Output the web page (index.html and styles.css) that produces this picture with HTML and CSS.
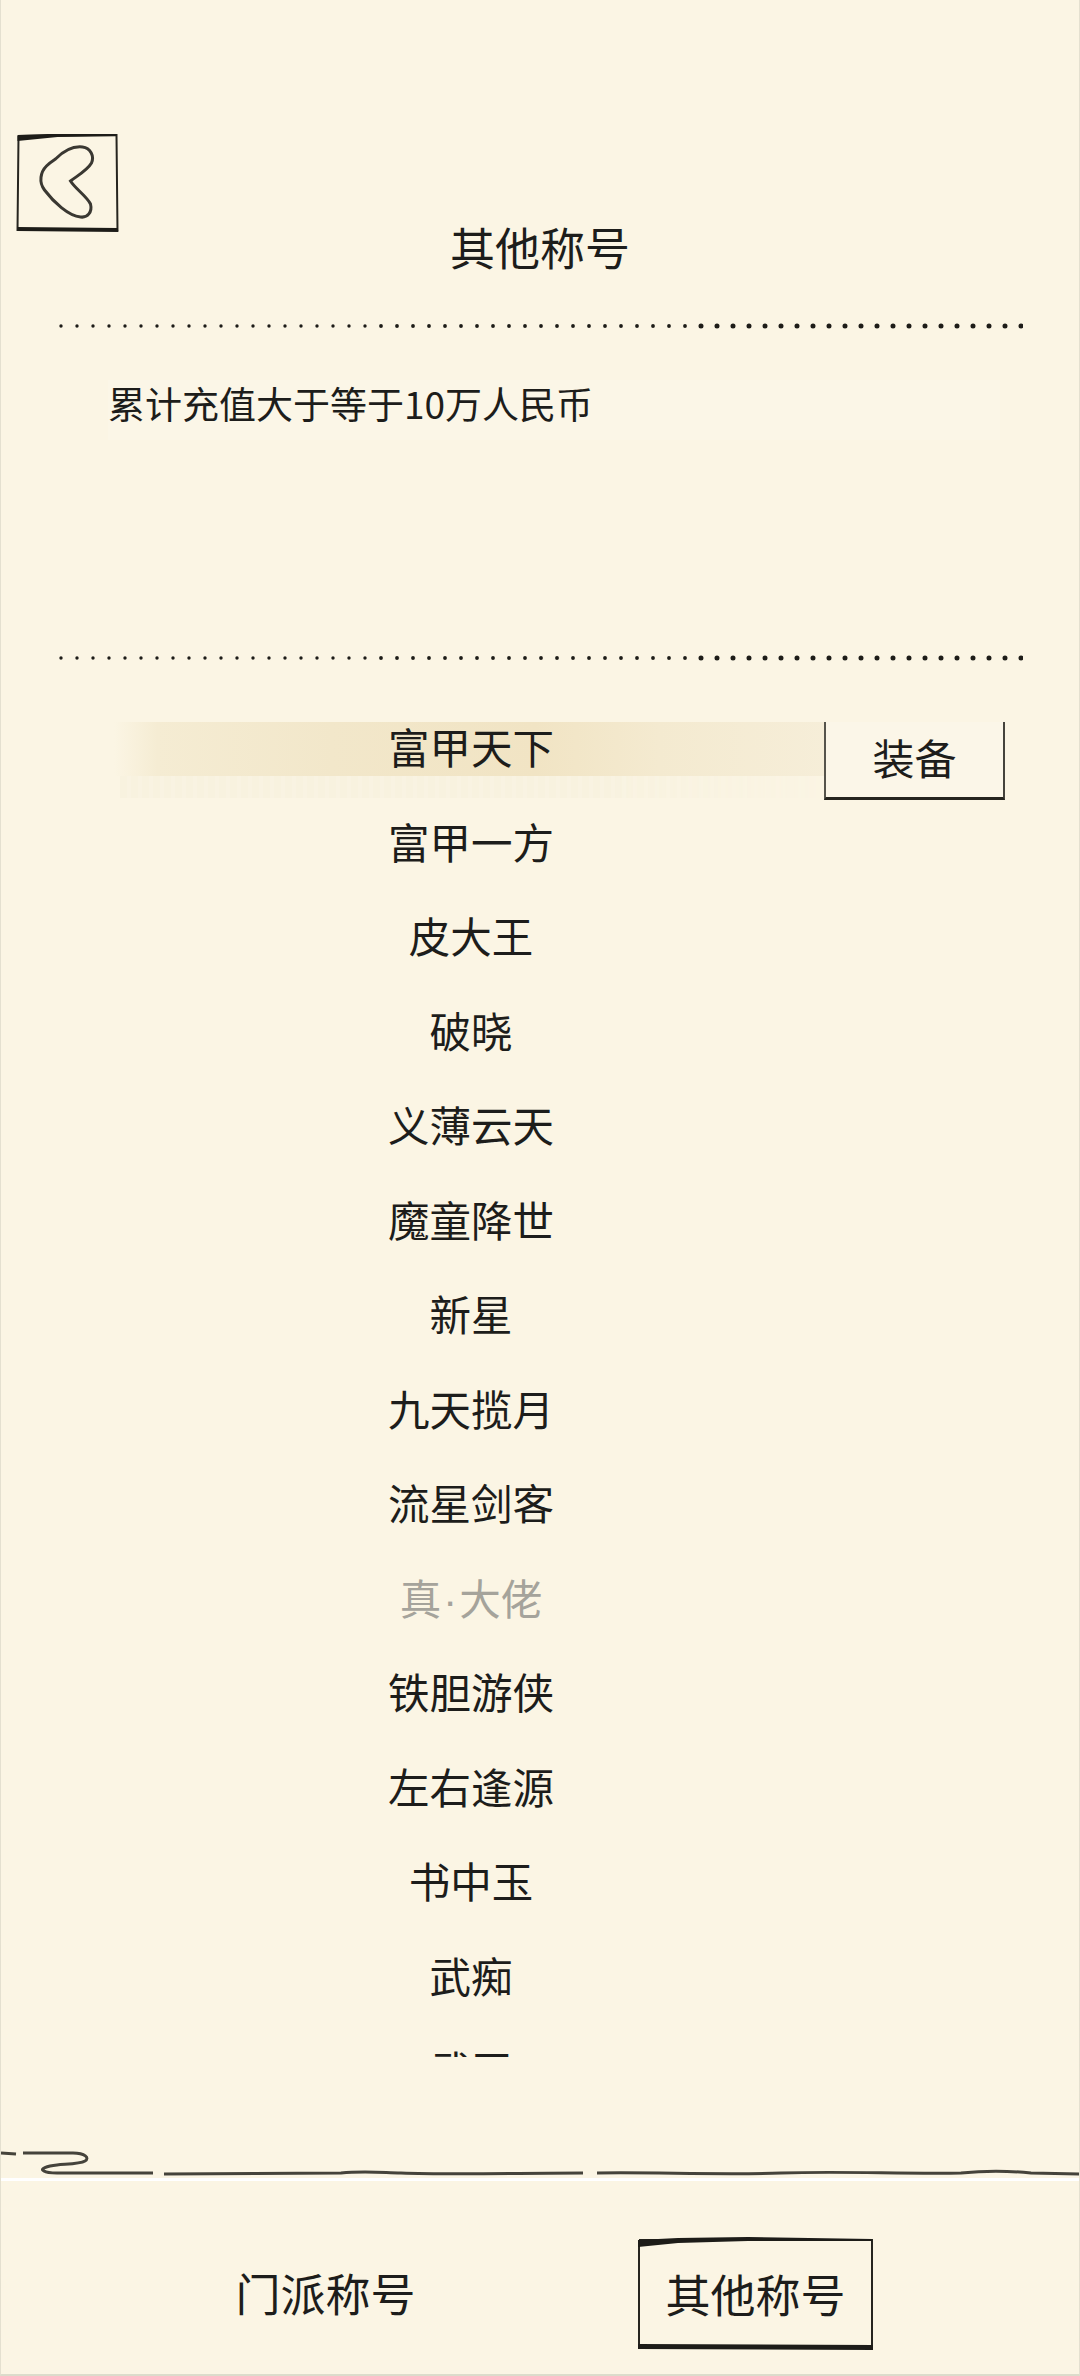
FILE: index.html
```html
<!DOCTYPE html>
<html lang="zh-CN">
<head>
    <meta charset="UTF-8">
    <meta name="viewport" content="width=device-width, initial-scale=1.0">
    <title>其他称号</title>
    <link rel="stylesheet" href="styles.css">
</head>
<body>
    <div class="page">
        <div class="top-bar">
            <svg class="back" viewBox="0 0 100 98" aria-label="返回">
                <path class="ink-thin" d="M1 2 L99 1 L100 97 M1 2 L0 97"/>
                <path class="ink-fill" d="M0 1 L30 0 L99 0 L99 2 L40 3 L0 7 Z"/>
                <path class="ink-fill" d="M0 93 L100 94 L101 98 L0 97 Z"/>
                <path class="ink-line" transform="translate(0 6)" d="M38 19 C46 11 56 6 65 7 C73 8 77 16 74 23 C70 30 61 35 53 41 C58 49 69 56 73 64 C75 72 70 78 63 77 C51 76 36 62 27 50 C21 42 23 32 29 26 C32 23 35 21 38 19 Z"/>
            </svg>
        </div>
        <h1 class="title">其他称号</h1>

        <svg class="dots dots-first" viewBox="0 0 964 12">
            <line x1="2" y1="6" x2="320" y2="6" stroke-width="3.4"/>
            <line x1="322" y1="6" x2="640" y2="6" stroke-width="3.8"/>
            <line x1="642" y1="6" x2="963" y2="6" stroke-width="5"/>
        </svg>

        <div class="desc">累计充值大于等于10万人民币</div>

        <svg class="dots dots-second" viewBox="0 0 964 12">
            <line x1="2" y1="6" x2="320" y2="6" stroke-width="3.4"/>
            <line x1="322" y1="6" x2="640" y2="6" stroke-width="3.8"/>
            <line x1="642" y1="6" x2="963" y2="6" stroke-width="5"/>
        </svg>

        <div class="title-list">
            <div class="row row-active">
                <span class="row-text">富甲天下</span>
                <button class="equip">装备</button>
            </div>
            <div class="row">富甲一方</div>
            <div class="row">皮大王</div>
            <div class="row">破晓</div>
            <div class="row">义薄云天</div>
            <div class="row">魔童降世</div>
            <div class="row">新星</div>
            <div class="row">九天揽月</div>
            <div class="row">流星剑客</div>
            <div class="row row-muted">真<span class="mid-dot">·</span>大佬</div>
            <div class="row">铁胆游侠</div>
            <div class="row">左右逢源</div>
            <div class="row">书中玉</div>
            <div class="row">武痴</div>
            <div class="row">武王</div>
        </div>

        <svg class="swirl" viewBox="0 0 1080 28">
            <path d="M0 3 L15 4"/>
            <path d="M22 3 L72 3 C84 3 89 8 84 11 C79 14 66 14 56 15 C46 16 38 19 43 21 C46 23 50 23 56 23 L152 23"/>
            <path d="M163 24 L340 23 C360 21 370 22 400 23 C450 25 520 23 582 23"/>
            <path d="M596 23 C650 22 720 25 780 23 C840 21 900 24 960 23 C990 20 1010 21 1030 23 L1080 24"/>
        </svg>
        <div class="white-line"></div>

        <div class="tabs">
            <div class="tab tab-plain">门派称号</div>
            <div class="tab tab-active">
                <svg class="tab-frame" viewBox="0 0 235 113" preserveAspectRatio="none">
                    <path class="ink-thin" d="M1 3 L234 3 L234 110 M1 3 L1 110"/>
                    <path class="ink-fill" d="M0 3 L40 1 L110 0 L234 2 L234 4 L110 4 L40 6 L0 10 Z"/>
                    <path class="ink-fill" d="M0 107 L235 108 L236 113 L0 112 Z"/>
                </svg>
                其他称号
            </div>
        </div>
    </div>
</body>
</html>
```

FILE: styles.css
```css
* {
    box-sizing: border-box;
}

body {
    margin: 0;
    background-color: #fbf5e4;
    color: #1d1d1b;
    font-family: "Noto Sans CJK SC", "Noto Sans", sans-serif;
}

.page {
    width: 1080px;
    height: 2376px;
    overflow: hidden;
    padding-top: 134px;
    border-left: 1px solid #e4e0d0;
    border-right: 1px solid #e4e0d0;
    border-bottom: 2px solid #dcdccb;
    margin: 0;
}

.top-bar {
    height: 91px;
    padding-left: 16px;
}

.back {
    display: block;
    width: 101px;
    height: 98px;
    overflow: visible;
}

.ink-thin {
    fill: none;
    stroke: #26251f;
    stroke-width: 2;
}

.ink-fill {
    fill: #1d1c18;
}

.ink-line {
    fill: none;
    stroke: #3a3832;
    stroke-width: 3;
}

.title {
    margin: 0;
    font-size: 45px;
    font-weight: 400;
    line-height: 44px;
    text-align: center;
}

.dots {
    display: block;
    width: 964px;
    height: 12px;
    margin-left: 58px;
}

    .dots line {
        stroke: #1d1c18;
        stroke-linecap: round;
        stroke-dasharray: 0 16;
    }

.dots-first {
    margin-top: 51px;
}

.dots-second {
    margin-top: 212px;
}

.desc {
    width: 892px;
    height: 60px;
    margin: 48px 0 0 107px;
    background-color: #fbf6e7;
    font-size: 37px;
    line-height: 46px;
}

.title-list {
    height: 1355px;
    margin-top: 38px;
    padding-left: 119px;
    overflow: hidden;
}

.row {
    position: relative;
    width: 702px;
    height: 94.5px;
    font-size: 41.5px;
    line-height: 88px;
    text-align: center;
}

.row-muted {
    color: #a5a39b;
}

.mid-dot {
    font-family: "Liberation Sans", sans-serif;
    margin: 0 2px;
}

.row-text {
    position: relative;
}

/* brush stroke behind the selected title */
.row-active::before {
    content: "";
    position: absolute;
    left: -6px;
    top: 20px;
    width: 726px;
    height: 54px;
    background: linear-gradient(90deg, #fbf5e4 0, #f5ecd3 6%, #f2e7ca 30%, #f1e4c4 58%, #f4ead0 75%, #f6eed9 100%);
}

.row-active::after {
    content: "";
    position: absolute;
    left: 0;
    top: 74px;
    width: 704px;
    height: 22px;
    background: repeating-linear-gradient(90deg, #f8f2df 0, #f8f2df 7px, #f9f3e2 7px, #f9f3e2 11px);
    -webkit-mask-image: linear-gradient(90deg, #000 70%, transparent);
    mask-image: linear-gradient(90deg, #000 70%, transparent);
}

.equip {
    position: absolute;
    left: 704px;
    top: 20px;
    z-index: 1;
    width: 181px;
    height: 78px;
    padding: 0 0 6px;
    background-color: #fbf6e8;
    border: none;
    border-left: 2px solid #56544c;
    border-right: 2px solid #45433c;
    border-bottom: 3px solid #26251f;
    border-radius: 0;
    color: #1d1d1b;
    font-family: inherit;
    font-size: 42px;
    line-height: 70px;
}

.swirl {
    display: block;
    width: 1080px;
    height: 28px;
    margin-top: 93px;
}

    .swirl path {
        fill: none;
        stroke: #45433b;
        stroke-width: 3;
    }

.white-line {
    height: 3px;
    background-color: #ffffff;
}

.tabs {
    display: flex;
    gap: 195px;
    margin-top: 56px;
    padding-left: 207px;
}

.tab {
    position: relative;
    width: 235px;
    height: 113px;
    font-size: 45px;
    line-height: 113px;
    text-align: center;
}

.tab-plain {
    line-height: 111px;
}

.tab-frame {
    position: absolute;
    left: 0;
    top: 0;
    width: 100%;
    height: 100%;
}
```
